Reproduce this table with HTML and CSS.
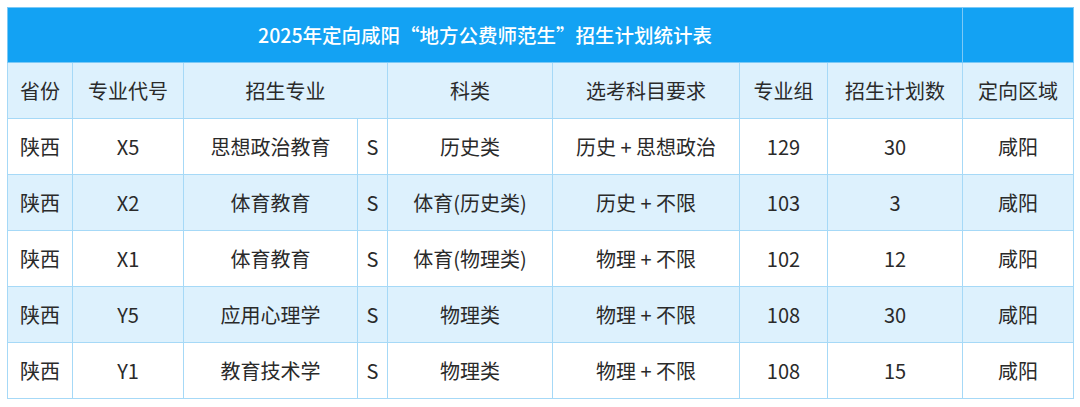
FILE: index.html
```html
<!DOCTYPE html>
<html lang="zh-CN">
<head>
<meta charset="utf-8">
<title>2025年定向咸阳“地方公费师范生”招生计划统计表</title>
<link rel="stylesheet" href="styles.css">
</head>
<body>
<table class="plan">
  <colgroup>
    <col class="c-prov">
    <col class="c-code">
    <col class="c-major">
    <col class="c-s">
    <col class="c-type">
    <col class="c-req">
    <col class="c-group">
    <col class="c-num">
    <col class="c-area">
  </colgroup>
  <thead>
    <tr class="title-row">
      <th colspan="8" class="title">2025年定向咸阳“地方公费师范生”招生计划统计表</th>
      <th class="title"></th>
    </tr>
    <tr class="head-row">
      <th>省份</th>
      <th>专业代号</th>
      <th colspan="2">招生专业</th>
      <th>科类</th>
      <th>选考科目要求</th>
      <th>专业组</th>
      <th>招生计划数</th>
      <th>定向区域</th>
    </tr>
  </thead>
  <tbody>
    <tr>
      <td>陕西</td><td>X5</td><td>思想政治教育</td><td>S</td><td>历史类</td><td>历史 + 思想政治</td><td>129</td><td>30</td><td>咸阳</td>
    </tr>
    <tr class="alt">
      <td>陕西</td><td>X2</td><td>体育教育</td><td>S</td><td>体育(历史类)</td><td>历史 + 不限</td><td>103</td><td>3</td><td>咸阳</td>
    </tr>
    <tr>
      <td>陕西</td><td>X1</td><td>体育教育</td><td>S</td><td>体育(物理类)</td><td>物理 + 不限</td><td>102</td><td>12</td><td>咸阳</td>
    </tr>
    <tr class="alt">
      <td>陕西</td><td>Y5</td><td>应用心理学</td><td>S</td><td>物理类</td><td>物理 + 不限</td><td>108</td><td>30</td><td>咸阳</td>
    </tr>
    <tr>
      <td>陕西</td><td>Y1</td><td>教育技术学</td><td>S</td><td>物理类</td><td>物理 + 不限</td><td>108</td><td>15</td><td>咸阳</td>
    </tr>
  </tbody>
</table>
</body>
</html>
```

FILE: styles.css
```css
html, body {
  margin: 0;
  padding: 0;
  background: #ffffff;
}

body {
  padding: 7px 0 0 7px;
  font-family: "Noto Sans CJK SC", "Noto Sans", sans-serif;
  color: #2a2a2a;
}

.plan {
  border-collapse: collapse;
  table-layout: fixed;
  width: 1066px;
}

.c-prov { width: 65px; }
.c-code { width: 111px; }
.c-major { width: 174px; }
.c-s { width: 30px; }
.c-type { width: 165px; }
.c-req { width: 187px; }
.c-group { width: 88px; }
.c-num { width: 135px; }
.c-area { width: 111px; }

.plan th,
.plan td {
  border: 1px solid #a6d9f7;
  padding: 0;
  height: 55px;
  text-align: center;
  vertical-align: middle;
  font-size: 20px;
  font-weight: 400;
  line-height: 1;
  white-space: nowrap;
}

.title-row .title {
  background: #13a2f3;
  color: #ffffff;
  font-size: 19.5px;
  font-weight: 500;
  height: 54px;
  border-color: #7cc9f6;
}

.head-row th {
  background: #ddf1fd;
  color: #2a2a2a;
}

.alt td {
  background: #ddf1fd;
}
```
